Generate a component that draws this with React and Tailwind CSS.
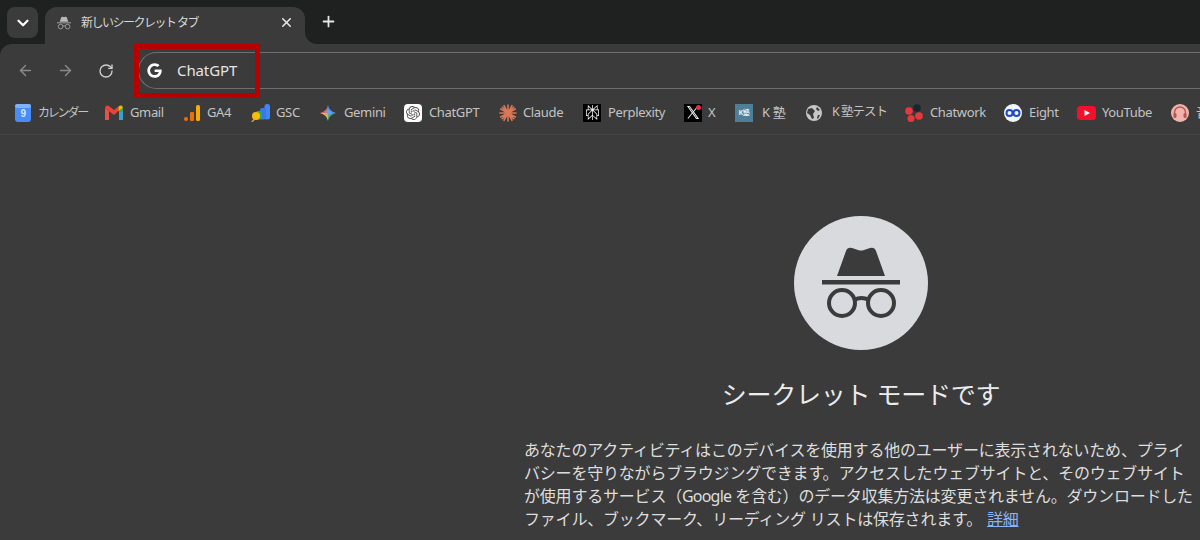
import { ArrowLeft, ArrowRight, ChevronDown, Plus, RotateCw, X } from "lucide-react";
import { FaGoogle } from "react-icons/fa";
import { SiOpenai, SiPerplexity } from "react-icons/si";

const Incognito = ({ className }) => (
  <svg viewBox="0 0 78 72" className={className} fill="currentColor">
    <path d="M15 29 L24 4 Q25.500 0 30 1 L36 3 Q39 4 42 3 L48 1 Q52.500 0 54 4 L63 29 Z" />
    <rect x="0" y="33" width="78" height="4.500" />
    <circle cx="20" cy="56" r="13" fill="none" stroke="currentColor" strokeWidth="4" />
    <circle cx="59" cy="56" r="13" fill="none" stroke="currentColor" strokeWidth="4" />
    <path d="M32 53 Q39.500 49 47 53" fill="none" stroke="currentColor" strokeWidth="4" />
  </svg>
);

const Calendar = () => (
  <svg viewBox="0 0 16 18" className="w-4 h-[18px]">
    <rect width="16" height="18" rx="3" fill="#4a8cf5" />
    <rect y="0" width="16" height="4" rx="2" fill="#7fb0fa" />
    <text x="8" y="13" fontSize="10" fontWeight="700" textAnchor="middle" fill="#d5e5ff" fontFamily="Liberation Sans, sans-serif">9</text>
  </svg>
);

const Gmail = () => (
  <svg viewBox="0 0 18 15" className="w-[18px] h-[15px]">
    <path d="M0 3 V15 H4 V6 Z" fill="#e8504a" />
    <path d="M18 3 V15 H14 V6 Z" fill="#3aa0d0" />
    <path d="M0 3 Q1 -1 4.500 1.500 L9 5 V10 L0 3Z" fill="#ea4335" />
    <path d="M9 5 L13.500 1.500 V6 L9 10Z" fill="#ea4335" />
    <path d="M13.500 1.500 Q17 -1 18 3 L14 6 H13.500Z" fill="#f5b400" />
    <path d="M14 6 L18 3 V7 H14Z" fill="#34a853" />
  </svg>
);

const GA4 = () => (
  <svg viewBox="0 0 16 16" className="w-4 h-4">
    <circle cx="2" cy="14" r="2" fill="#e8710a" />
    <rect x="6" y="7" width="4" height="9" rx="1" fill="#e8710a" />
    <rect x="12" y="0" width="4" height="16" rx="1.500" fill="#f9ab00" />
  </svg>
);

const GSC = () => (
  <svg viewBox="0 0 19 18" className="w-[19px] h-[18px]">
    <rect x="13.500" y="0" width="5.500" height="15.500" rx="2.500" fill="#4285f4" />
    <rect x="9" y="4" width="6" height="11.500" rx="2" fill="#3b78e7" />
    <rect x="5" y="7" width="6" height="8.500" rx="2" fill="#34a853" />
    <circle cx="5" cy="12" r="4" fill="#fbbc04" />
    <path d="M0 18 L3.500 14 L5 15 L1.500 18Z" fill="#e8a33c" />
  </svg>
);

const Gemini = () => (
  <svg viewBox="0 0 16 16" className="w-4 h-4">
    <path d="M8 0 Q9 6 16 8 H8Z" fill="#4f8ef0" />
    <path d="M8 0 Q7 6 0 8 H8Z" fill="#e8604c" />
    <path d="M0 8 Q7 10 8 16 V8Z" fill="#f4b93e" />
    <path d="M16 8 Q9 10 8 16 V8Z" fill="#3fae6a" />
    <path d="M8 4 L12 8 L8 12 L4 8Z" fill="#7aa7ef" fillOpacity="0.6" />
  </svg>
);

const Claude = () => (
  <svg viewBox="0 0 18 18" className="w-[18px] h-[18px]" stroke="#d97757" strokeWidth="1.600" strokeLinecap="round">
    <path d="M9 1V17M1 9H17M3.300 3.300L14.700 14.700M14.700 3.300L3.300 14.700M5 1.700L13 16.300M13 1.700L5 16.300M1.700 5L16.300 13M16.300 5L1.700 13" />
  </svg>
);

const XLogo = () => (
  <span className="relative flex w-[18px] h-[18px] items-center justify-center bg-black">
    <svg viewBox="0 0 14 16" className="w-3 h-[15px]" stroke="#e8e8e8" fill="none">
      <path d="M1 1 L11 15 H13 L3 1Z" strokeWidth="1.200" />
      <path d="M12.500 1 L1 15" strokeWidth="1.200" />
    </svg>
    <span className="absolute top-[1px] right-[1px] w-[5px] h-[5px] rounded-full bg-[#e5304a]"></span>
  </span>
);

const KJuku = () => (
  <span className="flex w-[18px] h-[18px] items-center justify-center bg-[#4f7f96] text-[7px] leading-none font-bold text-[#dff0f7]">K塾</span>
);

const Globe = () => (
  <svg viewBox="0 0 16 16" className="w-4 h-4">
    <circle cx="8" cy="8" r="8" fill="#c7c7c7" />
    <path d="M2 4 L6 3 L9 6 L7 9 L8 13 L6 14 L4 10 L1 8Z M11 2 L14 5 L12 6 L10 4Z M12 10 L14 10 L12 14 L11 13Z" fill="#3b3b3b" />
  </svg>
);

const Chatwork = () => (
  <svg viewBox="0 0 18 18" className="w-[18px] h-[18px]">
    <circle cx="12" cy="4" r="3.800" fill="#1b2430" />
    <circle cx="4" cy="7" r="3.800" fill="#e8383d" />
    <circle cx="14" cy="12" r="3.800" fill="#e8383d" />
    <circle cx="6" cy="14.500" r="3.500" fill="#e8383d" />
  </svg>
);

const Eight = () => (
  <svg viewBox="0 0 18 18" className="w-[18px] h-[18px]">
    <circle cx="9" cy="9" r="9" fill="#f2f4fb" />
    <circle cx="5.500" cy="9" r="3" fill="none" stroke="#1f49c8" strokeWidth="2" />
    <circle cx="12.500" cy="9" r="3" fill="none" stroke="#1f49c8" strokeWidth="2" />
  </svg>
);

const YouTube = () => (
  <svg viewBox="0 0 19 14" className="w-[19px] h-[14px]">
    <rect width="19" height="14" rx="3.500" fill="#f40f2a" />
    <path d="M7.500 4 L13 7 L7.500 10Z" fill="#fff" />
  </svg>
);

const Headphones = () => (
  <svg viewBox="0 0 18 18" className="w-[18px] h-[18px]">
    <circle cx="9" cy="9" r="9" fill="#f0b4ae" />
    <path d="M3.500 11 V8.500 A5.500 5.500 0 0 1 14.500 8.500 V11" fill="none" stroke="#b8544e" strokeWidth="1.400" />
    <rect x="2.500" y="9" width="3" height="5" rx="1.500" fill="#b8544e" />
    <rect x="12.500" y="9" width="3" height="5" rx="1.500" fill="#b8544e" />
  </svg>
);

const bookmarks = [
  { label: "カレンダー", icon: <Calendar />, cls: "w-[90px] ml-[15px] gap-[7px]", text: "text-[12px] tracking-[-2.2px]" },
  { label: "Gmail", icon: <Gmail />, cls: "w-[79px] gap-[7px]" },
  { label: "GA4", icon: <GA4 />, cls: "w-[67px] gap-[7px]" },
  { label: "GSC", icon: <GSC />, cls: "w-[69px] gap-[6px]" },
  { label: "Gemini", icon: <Gemini />, cls: "w-[84px] gap-[8px]" },
  {
    label: "ChatGPT",
    icon: (
      <span className="flex w-[18px] h-[18px] items-center justify-center rounded-[4px] bg-white text-[#555]">
        <SiOpenai size={14} />
      </span>
    ),
    cls: "w-[95px] gap-[7px]",
  },
  { label: "Claude", icon: <Claude />, cls: "w-[84px] gap-[6px]" },
  {
    label: "Perplexity",
    icon: (
      <span className="flex w-[18px] h-[18px] items-center justify-center bg-black text-white">
        <SiPerplexity size={15} />
      </span>
    ),
    cls: "w-[101px] gap-[7px]",
  },
  { label: "X", icon: <XLogo />, cls: "w-[51px] gap-[6px]" },
  { label: "K 塾", icon: <KJuku />, cls: "w-[71px] gap-[9px]" },
  { label: "K 塾テスト", icon: <Globe />, cls: "w-[99px] gap-[10px]", text: "text-[12.500px] tracking-[-1px]" },
  { label: "Chatwork", icon: <Chatwork />, cls: "w-[99px] gap-[7px]" },
  { label: "Eight", icon: <Eight />, cls: "w-[73px] gap-[7px]" },
  { label: "YouTube", icon: <YouTube />, cls: "w-[94px] gap-[6px]" },
  { label: "音楽", icon: <Headphones />, cls: "w-[60px] gap-[7px]" },
];

export default function App() {
  return (
    <div className="relative h-[540px] w-[1200px] overflow-hidden bg-[#3b3b3b] font-['Noto_Sans','Noto_Sans_CJK_JP',sans-serif]">
      <div className="bg-[#1f2020]">
        {/* tab strip */}
        <div className="flex h-[44px] items-start pl-[7px] pt-[7px]">
          <button className="flex h-[31px] w-[31px] items-center justify-center rounded-lg bg-[#3b3b3b] text-white">
            <ChevronDown size={18} strokeWidth={3} />
          </button>
          <div className="relative ml-[7px] flex h-[37px] w-[260px] items-center rounded-t-xl bg-[#3b3b3b] pb-[6px] pl-[12px] pr-[11px]">
            <Incognito className="h-[14px] w-[14px] text-[#b9b9b9]" />
            <span className="ml-[10px] text-xs tracking-[-1.5px] text-[#d8d8d8]">新しいシークレット タブ</span>
            <X size={15} strokeWidth={2.5} className="ml-auto text-[#e6e6e6]" />
            {/* concave foot on the right of the tab */}
            <div className="absolute bottom-0 left-full h-3 w-3 bg-[#3b3b3b]">
              <div className="h-3 w-3 rounded-bl-xl bg-[#1f2020]"></div>
            </div>
          </div>
          <Plus size={17} strokeWidth={2.5} className="ml-[15px] mt-[6px] text-[#e6e6e6]" />
        </div>

        {/* toolbar */}
        <div className="flex h-[46px] items-start rounded-tl-xl bg-[#3b3b3b] pt-[8px]">
          <div className="flex h-[37px] w-[138px] items-center pl-[17px] text-[#8a8a8a]">
            <ArrowLeft size={17} />
            <ArrowRight size={17} className="ml-[23px]" />
            <RotateCw size={16} className="ml-[24px] text-[#cfcfcf]" />
          </div>
          <div className="flex h-[37px] flex-1 items-center rounded-l-full border border-r-0 border-[#6e6e6e] pl-[8px]">
            <FaGoogle size={15} className="text-white" />
            <span className="ml-[15px] text-[15px] tracking-[-0.1px] text-[#e4e4e4]">ChatGPT</span>
          </div>
        </div>
      </div>

      {/* bookmarks bar */}
      <div className="flex h-[45px] items-center border-b border-[#444] pt-[1px] text-[13px] tracking-[-0.35px] text-[#c4c4c4]">
        {bookmarks.map((b) => (
          <div key={b.label} className={`flex shrink-0 items-center whitespace-nowrap ${b.cls}`}>
            {b.icon}
            <span className={b.text}>{b.label}</span>
          </div>
        ))}
      </div>

      {/* incognito page */}
      <main className="ml-[524px] w-[674px] pt-[81px]">
        <div className="mx-auto flex h-[134px] w-[134px] items-center justify-center rounded-full bg-[#d9dadd] text-[#3b3b3b]">
          <Incognito className="h-[72px] w-[78px]" />
        </div>
        <h1 className="mt-[26px] text-center text-[25px] leading-9 tracking-[-0.25px] text-[#ececec]">シークレット モードです</h1>
        <div className="mt-[27px] text-base leading-[23px] tracking-[-0.2px] text-[#dedede]">
          <p className="whitespace-nowrap">あなたのアクティビティはこのデバイスを使用する他のユーザーに表示されないため、プライ</p>
          <p className="whitespace-nowrap">バシーを守りながらブラウジングできます。アクセスしたウェブサイトと、そのウェブサイト</p>
          <p className="whitespace-nowrap">
            が使用するサービス（<span className="tracking-[-0.8px]">Google</span> を含む）のデータ収集方法は変更されません。ダウンロードした
          </p>
          <p className="whitespace-nowrap">
            ファイル、ブックマーク、リーディング リストは保存されます。
            <a className="ml-[5px] text-[#8ab4f8] underline">詳細</a>
          </p>
        </div>
      </main>

      {/* red annotation box */}
      <div className="absolute left-[134px] top-[44px] h-[54px] w-[126px] border-[5px] border-[#b80000]"></div>
    </div>
  );
}
